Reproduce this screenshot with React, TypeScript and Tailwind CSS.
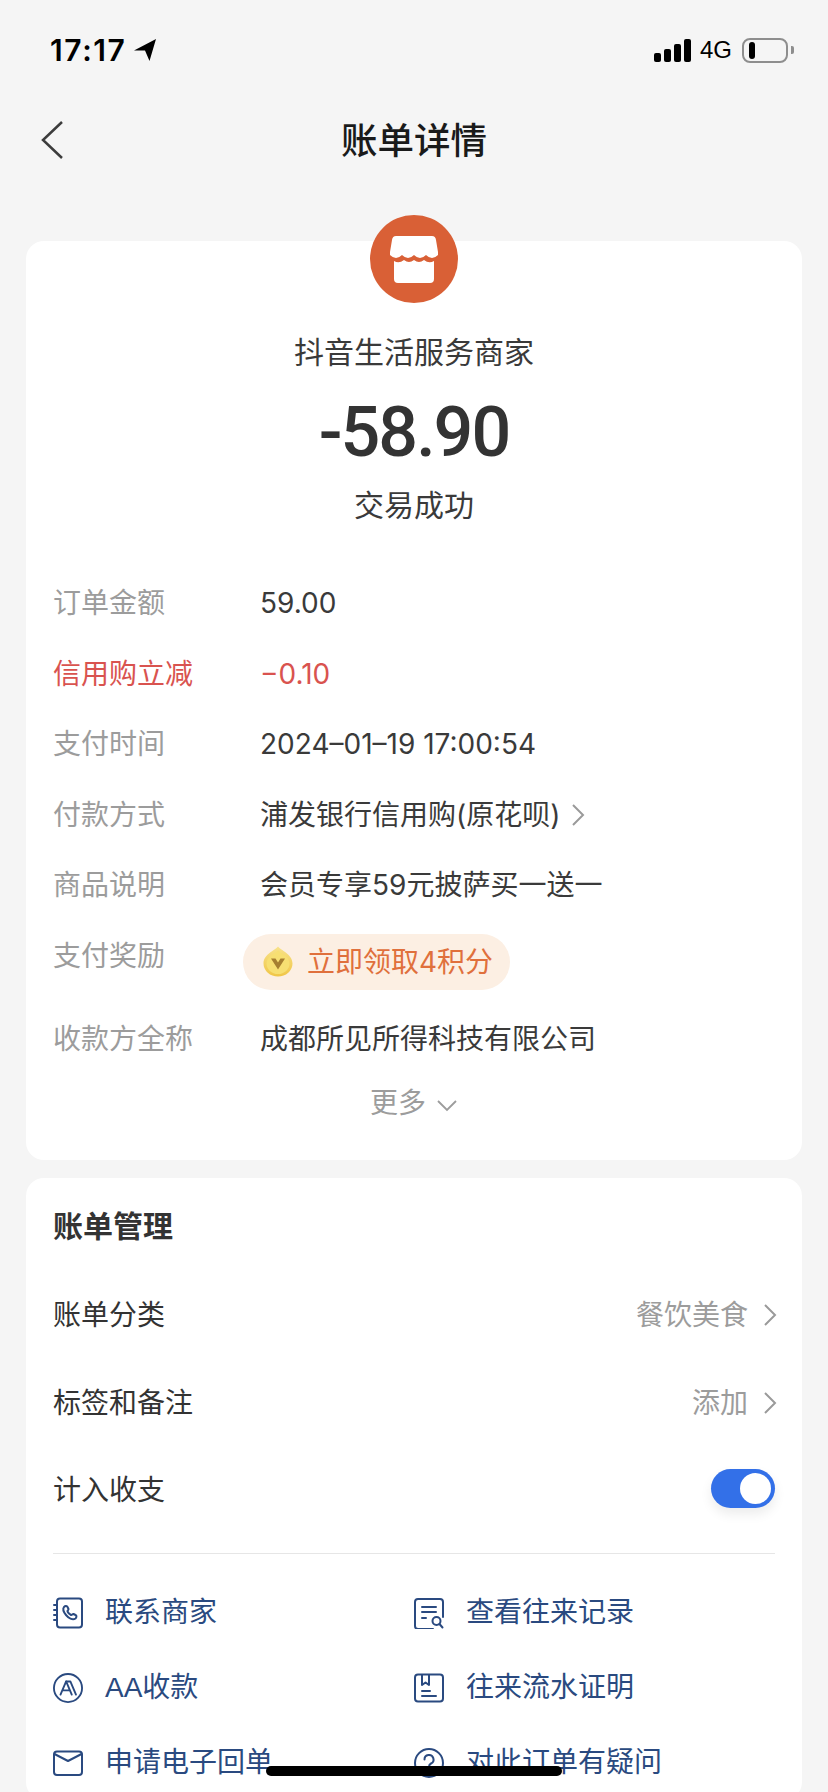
import React from "react";

const INK = "#2a4a80";

function Chevron({ color = "#9a9a9a" }: { color?: string }) {
  return (
    <svg width="14" height="24" viewBox="0 0 14 24" fill="none">
      <path d="M2 2l10 10L2 22" stroke={color} strokeWidth="2" />
    </svg>
  );
}

function Store() {
  return (
    <svg width="88" height="88" viewBox="0 0 88 88">
      <circle cx="44" cy="44" r="44" fill="#d96036" />
      <path d="M26 21H62Q65.500 21 66 25L68 37V40Q62 46 56 40Q50 46 44 40Q38 46 32 40Q26 46 20 40V37L22 25Q22.500 21 26 21Z" fill="#fff" />
      <path d="M24 46Q29 49 34 45Q39 49 44 45Q49 49 54 45Q59 49 64 46V64Q64 68 60 68H28Q24 68 24 64Z" fill="#fff" />
    </svg>
  );
}

function Coin() {
  return (
    <svg width="30" height="31" viewBox="0 0 30 31">
      <defs>
        <linearGradient id="coinEdge" x1="0" y1="0" x2="0" y2="1">
          <stop offset="0%" stopColor="#f8e28a" />
          <stop offset="100%" stopColor="#f0c648" />
        </linearGradient>
      </defs>
      <path d="M15 .5C18 4.500 29.500 8 29.500 17.500A14.500 13 0 0 1 .5 17.500C.5 8 12 4.500 15 .5Z" fill="url(#coinEdge)" />
      <path d="M15 4.500C17.500 7.500 26.500 10 26.500 17.500A11.500 10.500 0 0 1 3.500 17.500C3.500 10 12.500 7.500 15 4.500Z" fill="#f7df72" />
      <path d="M8 12.500h4.500L15 16.500l2.500-4H22L15 23.500Z" fill="#a67f30" />
    </svg>
  );
}

const stroke = { fill: "none", stroke: INK, strokeWidth: 2, strokeLinecap: "round" as const, strokeLinejoin: "round" as const };

function IconContact() {
  return (
    <svg width="30" height="32" viewBox="0 0 30 32" {...stroke}>
      <rect x="4" y="1.500" width="25" height="29" rx="3" />
      <path d="M1 8h3M1 13h3M1 18h3M1 23h3" />
      <path d="M11 10c1-1 3-1.500 3.500 0l1 2c.3 1-1.500 1.500-1 2.500.7 1.500 2 2.800 3.500 3.500 1 .4 1.500-1.300 2.500-1l2 1c1.500.7 1 2.500 0 3.500-3 2-7-.5-9.500-3.500C11 15.500 9.500 12 11 10Z" />
    </svg>
  );
}
function IconSearch() {
  return (
    <svg width="30" height="32" viewBox="0 0 30 32" {...stroke}>
      <path d="M29 20V5a3 3 0 0 0-3-3H4a3 3 0 0 0-3 3v24a3 3 0 0 0 3 3h15" />
      <path d="M8 10h14M8 15h14M8 21h4" />
      <circle cx="22.500" cy="24" r="4" />
      <path d="M25.500 27l3 3.500" />
    </svg>
  );
}
function IconAA() {
  return (
    <svg width="32" height="32" viewBox="0 0 32 32" {...stroke}>
      <circle cx="16" cy="16" r="15" />
      <path d="M8 23l6-14 6 14M10.500 18.500h7" />
      <path d="M14 9h4.500L24.500 23" />
    </svg>
  );
}
function IconDoc() {
  return (
    <svg width="30" height="30" viewBox="0 0 30 30" {...stroke}>
      <rect x="1" y="1.500" width="28" height="27" rx="3" />
      <path d="M8 2v10l3.500-2.500L15 12V2" />
      <path d="M8 18h8M8 23h14" />
    </svg>
  );
}
function IconMail() {
  return (
    <svg width="30" height="26" viewBox="0 0 30 26" {...stroke}>
      <rect x="1" y="1.500" width="28" height="23.500" rx="3" />
      <path d="M1.500 4L15 11 28.500 4" />
    </svg>
  );
}
function IconQ() {
  return (
    <svg width="30" height="30" viewBox="0 0 30 30" {...stroke}>
      <circle cx="15" cy="15" r="14" />
      <path d="M10.500 11.500a4.500 4.500 0 1 1 6.500 4c-1.500.8-2 1.500-2 3" />
      <path d="M15 22.500v.5" />
    </svg>
  );
}

function Row({ label, children, red }: { label: string; children: React.ReactNode; red?: boolean }) {
  return (
    <div className={`flex items-center h-[70.5px] text-[28px] ${red ? "text-[#d9534f]" : "text-[#3a3a3a]"}`}>
      <div className={`w-[207px] shrink-0 ${red ? "" : "text-[#9c9c9c]"}`}>{label}</div>
      {children}
    </div>
  );
}

function Link({ icon, text }: { icon: React.ReactNode; text: string }) {
  return (
    <div className="flex items-center h-[75px]">
      <div className="w-[30px] flex justify-center shrink-0">{icon}</div>
      <div className="ml-[22px] text-[28px] text-[#2a4a80] whitespace-nowrap font-['Liberation_Sans','Noto_Sans_CJK_SC',sans-serif]">{text}</div>
    </div>
  );
}

export default function App() {
  return (
    <div className="relative h-[1792px] w-[828px] overflow-hidden bg-[#f5f5f5] font-['Inter','Noto_Sans_CJK_SC',sans-serif]">
      {/* status bar */}
      <div className="flex items-center justify-between h-[100px] pl-[50px] pr-[34px]">
        <div className="flex items-center gap-[7px] text-[30px] font-semibold text-black tracking-[1.600px]">
          <span>17:17</span>
          <svg width="22" height="22" viewBox="0 0 22 22"><path d="M22 0L0 11.500h11L15.500 22Z" fill="#000" /></svg>
        </div>
        <div className="flex items-center">
          <div className="flex items-end gap-[3px] h-[23px]">
            <div className="w-[7px] h-[9px] rounded-[2px] bg-black" />
            <div className="w-[7px] h-[13px] rounded-[2px] bg-black" />
            <div className="w-[7px] h-[18px] rounded-[2px] bg-black" />
            <div className="w-[7px] h-[23px] rounded-[2px] bg-black" />
          </div>
          <span className="ml-[9px] text-[24px] leading-none text-black font-['Liberation_Sans',sans-serif]">4G</span>
          <div className="ml-[10px] flex items-center w-[46px] h-[25px] rounded-[8px] border-2 border-[#8e8e8e] pl-[5px]">
            <div className="w-[6px] h-[17px] rounded-[3px] bg-black" />
          </div>
          <div className="ml-[3px] w-[3px] h-[8px] rounded-r-[2px] bg-[#8e8e8e]" />
        </div>
      </div>

      {/* nav */}
      <div className="relative flex items-center justify-center h-[80px]">
        <svg className="absolute left-[41px] top-[21px]" width="22" height="38" viewBox="0 0 22 38" fill="none">
          <path d="M21 1L2 19l19 18" stroke="#3c3c3c" strokeWidth="2.500" />
        </svg>
        <div className="mt-[2px] text-[36.500px] font-medium text-[#1a1a1a] leading-none">账单详情</div>
      </div>

      {/* summary card */}
      <div className="relative mt-[61px] mx-[26px] bg-white rounded-[18px] pt-[89px] px-[27px] pb-[28px]">
        <div className="absolute top-[-26px] left-[344px]"><Store /></div>
        <div className="text-center text-[30px] leading-[44px] text-[#3a3a3a]">抖音生活服务商家</div>
        <div className="mt-[14px] text-center text-[70px] leading-[88px] font-medium text-[#333333] tracking-[-2px] font-['Roboto',sans-serif]">-58.90</div>
        <div className="mt-[7px] text-center text-[30px] leading-[44px] text-[#3a3a3a]">交易成功</div>

        <div className="mt-[41px]">
          <Row label="订单金额">59.00</Row>
          <Row label="信用购立减" red>−0.10</Row>
          <Row label="支付时间">2024–01–19 17:00:54</Row>
          <Row label="付款方式">
            <span>浦发银行信用购(原花呗)</span>
            <span className="ml-[11px] flex"><Chevron /></span>
          </Row>
          <Row label="商品说明">会员专享59元披萨买一送一</Row>
          <div className="flex items-start h-[83px] text-[28px]">
            <div className="w-[190px] shrink-0 text-[#9c9c9c] h-[70px] flex items-center">支付奖励</div>
            <div className="mt-[13px] flex items-center h-[56px] rounded-full bg-[#fcefe3] pl-[20px] pr-[17px] text-[#e0703c]">
              <Coin />
              <span className="ml-[14px]">立即领取4积分</span>
            </div>
          </div>
          <Row label="收款方全称">成都所见所得科技有限公司</Row>
        </div>

        <div className="flex items-center justify-center h-[58px] text-[28px] text-[#9c9c9c]">
          <span>更多</span>
          <svg className="ml-[10px] mt-[4px]" width="22" height="13" viewBox="0 0 22 13" fill="none">
            <path d="M2 2l9 9 9-9" stroke="#9c9c9c" strokeWidth="1.800" />
          </svg>
        </div>
      </div>

      {/* management card */}
      <div className="mt-[18px] mx-[26px] bg-white rounded-[18px] pt-[24px] px-[27px]">
        <div className="h-[48px] flex items-center text-[30px] font-semibold text-[#333333]">账单管理</div>
        <div className="mt-[21px] text-[28px] text-[#333333]">
          <div className="flex items-center justify-between h-[88px]">
            <span>账单分类</span>
            <span className="flex items-center gap-[15px] mr-[-2px] text-[#9c9c9c]">餐饮美食<Chevron /></span>
          </div>
          <div className="flex items-center justify-between h-[88px]">
            <span>标签和备注</span>
            <span className="flex items-center gap-[15px] mr-[-2px] text-[#9c9c9c]">添加<Chevron /></span>
          </div>
          <div className="flex items-center justify-between h-[86px]">
            <span>计入收支</span>
            <div className="mt-[-3px] flex items-center justify-end w-[64px] h-[39px] rounded-full bg-[#3370e8] pr-[4px] shadow-[0_6px_12px_rgba(0,0,0,0.08)]">
              <div className="w-[31px] h-[31px] rounded-full bg-white" />
            </div>
          </div>
        </div>
        <div className="mt-[20px] h-[1px] bg-[#e6e6e6]" />
        <div className="mt-[21px] grid grid-cols-[361px_1fr]">
          <Link icon={<IconContact />} text="联系商家" />
          <Link icon={<IconSearch />} text="查看往来记录" />
          <Link icon={<IconAA />} text="AA收款" />
          <Link icon={<IconDoc />} text="往来流水证明" />
          <Link icon={<IconMail />} text="申请电子回单" />
          <Link icon={<IconQ />} text="对此订单有疑问" />
        </div>
      </div>

      {/* home indicator */}
      <div className="absolute left-[266px] top-[1766px] w-[296px] h-[10px] rounded-full bg-black" />
    </div>
  );
}
